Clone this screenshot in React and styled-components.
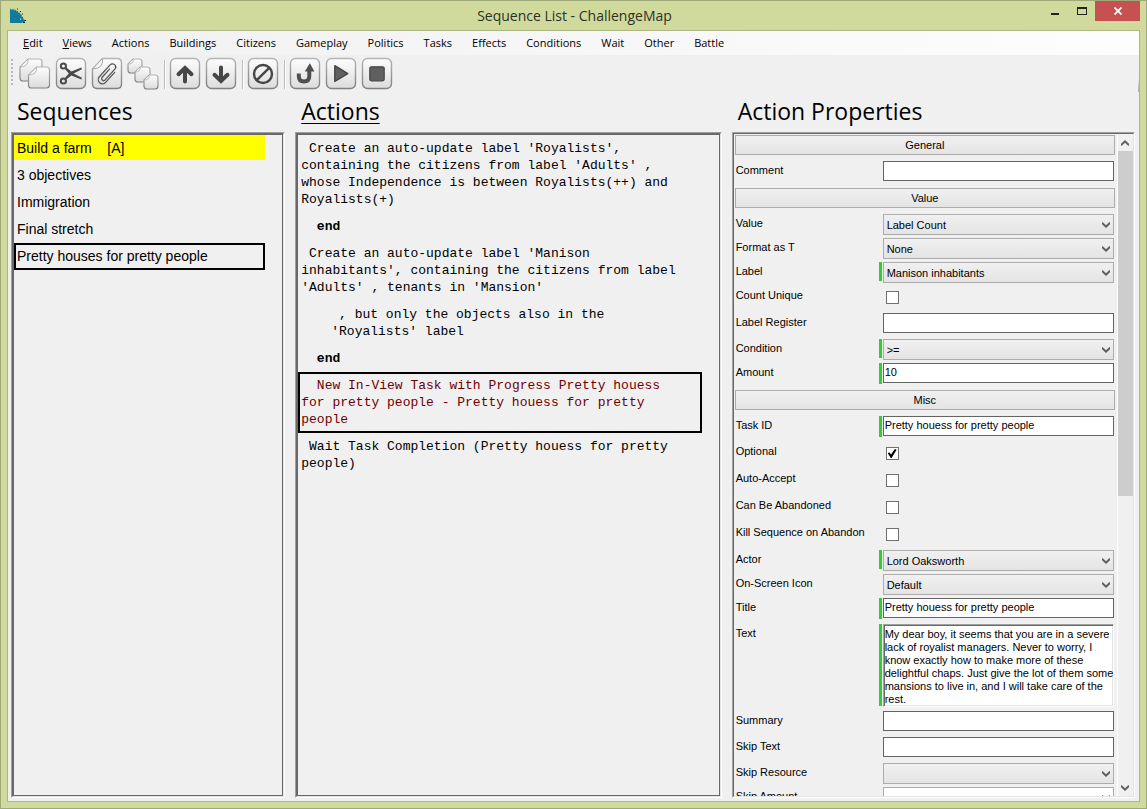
import React from 'react';
import styled, { createGlobalStyle, css } from 'styled-components';

const uiFont = '"Open Sans", "Noto Sans", sans-serif';
const formFont = '"Liberation Sans", Arial, sans-serif';
const codeFont = '"Liberation Mono", "Courier New", monospace';

const GlobalStyle = createGlobalStyle`
    * {
        box-sizing: border-box;
    }
    body {
        margin: 0;
        color: #000;
        background: #d0da9c;
        font-family: ${uiFont};
    }
    button, input, select, textarea {
        margin: 0;
        color: inherit;
        font: inherit;
    }
`;

export const Window = styled.div`
    display: flex;
    flex-direction: column;
    height: 100vh;
    padding: 0 6px 6px;
    border: 1px solid #9fa878;
    background: #d0da9c;
`;

export const TitleBar = styled.header`
    display: grid;
    grid-template-columns: 1fr auto 1fr;
    height: 29px;
    flex: none;
    padding-left: 2px;
`;

export const AppIcon = styled.svg`
    width: 18px;
    height: 18px;
    margin-top: 6px;
`;

export const WindowTitle = styled.h1`
    margin: 0;
    font-size: 14px;
    font-weight: normal;
    line-height: 29px;
    color: #2e3122;
`;

export const WindowButtons = styled.div`
    display: flex;
    justify-content: flex-end;
`;

export const WindowButton = styled.button`
    display: flex;
    align-items: center;
    justify-content: center;
    width: ${({ $close }) => ($close ? 45 : 27)}px;
    height: 20px;
    padding: 0;
    border: 0;
    color: ${({ $close }) => ($close ? '#fff' : '#222')};
    background: ${({ $close }) => ($close ? '#c75050' : 'transparent')};
`;

export const Client = styled.div`
    display: flex;
    flex: 1;
    flex-direction: column;
    min-height: 0;
    border: 1px solid #aeb784;
    background: #f0f0f0;
`;

export const MenuBar = styled.nav`
    display: flex;
    flex: none;
    gap: 20px;
    height: 24px;
    padding: 0 15px;
    background: linear-gradient(90deg, #f0f0f0, #fdfdfd);
`;

export const MenuItem = styled.a`
    font-size: 11px;
    line-height: 24px;
    color: #000;
    text-decoration: none;
    white-space: nowrap;
`;

export const ToolBar = styled.div`
    display: flex;
    flex: none;
    height: 38px;
    padding: 1px 2px 0;
    background: linear-gradient(#f0f0f0 60%, #a8a8a8) right / 1px 36px no-repeat;
`;

export const Grip = styled.div`
    width: 2px;
    height: 27px;
    margin: 3px 4px 0 1px;
    background: repeating-linear-gradient(#b9b9b9 0 2px, transparent 2px 4px);
`;

export const ToolButton = styled.button`
    width: 36px;
    height: 36px;
    padding: 0;
    border: 0;
    background: none;
    svg {
        display: block;
    }
`;

export const Separator = styled.div`
    width: 6px;
    height: 29px;
    margin-top: 4px;
    background: linear-gradient(90deg, #bdbdbd 1px, #fff 1px) 3px 0 / 2px 100% no-repeat;
`;

export const Workspace = styled.main`
    display: grid;
    flex: 1;
    grid-template-columns: 274fr 426fr 403fr;
    gap: 10px;
    min-height: 0;
    padding: 0 4px 3px 3px;
`;

export const Column = styled.section`
    display: flex;
    flex-direction: column;
    min-width: 0;
    min-height: 0;
`;

export const ColumnTitle = styled.h2`
    flex: none;
    margin: 0;
    padding: 0 0 2px 6px;
    font-size: 23px;
    font-weight: normal;
    line-height: 37px;
    text-decoration: ${({ $underlined }) => ($underlined ? 'underline' : 'none')};
    text-decoration-thickness: 1px;
    text-underline-offset: 3px;
`;

export const Sunken = styled.div`
    display: flex;
    flex: 1;
    min-height: 0;
    border: 1px solid;
    border-color: #a0a0a0 #fff #fff #a0a0a0;
`;

export const SunkenInner = styled.div`
    display: flex;
    flex: 1;
    min-width: 0;
    min-height: 0;
    border: 1px solid;
    border-color: #696969 #e3e3e3 #e3e3e3 #696969;
`;

export const List = styled.ul`
    flex: 1;
    min-width: 0;
    margin: 0;
    padding: 0 17px 0 0;
    border: 1px solid #696969;
    overflow: hidden;
    list-style: none;
`;

const selectedBox = css`
    box-shadow: inset 0 0 0 2px #000;
`;

export const SequenceItem = styled.li`
    height: 27px;
    padding-left: 3px;
    border-bottom: ${({ $selected }) => ($selected ? 0 : 2)}px solid transparent;
    background: ${({ $running }) => ($running ? '#ff0' : 'none')} padding-box;
    font-family: ${formFont};
    font-size: 14px;
    line-height: 27px;
    white-space: pre;
    ${({ $selected }) => $selected && selectedBox}
`;

export const ActionItem = styled.li`
    padding: 5px 14px 5px 3px;
    padding-left: ${({ $nested }) => ($nested ? 33 : 3)}px;
    color: ${({ $selected }) => ($selected ? '#700000' : '#000')};
    font-family: ${codeFont};
    font-size: 13px;
    font-weight: ${({ $keyword }) => ($keyword ? 'bold' : 'normal')};
    line-height: 17px;
    white-space: pre-wrap;
    ${({ $selected }) => $selected && selectedBox}
`;

export const Form = styled.form`
    flex: 1;
    min-width: 0;
    padding: 0 2px 0 1px;
    overflow: hidden;
    font-family: ${formFont};
    font-size: 11px;
`;

export const GroupButton = styled.button`
    display: block;
    width: 100%;
    height: 20px;
    margin: 1px 0 6px;
    padding: 0;
    border: 1px solid #acacac;
    background: linear-gradient(#f0f0f0, #e4e4e4);
    line-height: 18px;
`;

const rowHeights = { text: 26, select: 24, number: 24, check: 27, area: 87 };

export const Row = styled.div`
    display: grid;
    grid-template-columns: 142px 3px minmax(0, 1fr);
    column-gap: 1px;
    align-items: start;
    height: ${({ $kind }) => rowHeights[$kind]}px;
    padding: 0 1px;
`;

export const Label = styled.label`
    padding-top: 3px;
    line-height: 13px;
    white-space: nowrap;
`;

export const ChangedBar = styled.span`
    height: ${({ $kind }) => ({ text: 21, area: 82 }[$kind] || 19)}px;
    background: ${({ $changed }) => ($changed ? '#32cd32' : 'none')};
`;

export const TextInput = styled.input`
    width: 100%;
    height: 20px;
    padding: 0 1px 2px;
    border: 1px solid #646464;
    border-radius: 0;
    background: #fff;
    outline: none;
`;

export const TextArea = styled.textarea`
    display: block;
    width: 100%;
    height: 83px;
    padding: 3px 0 0 1px;
    border: 1px solid;
    border-color: #a0a0a0 #fff #fff #a0a0a0;
    box-shadow: inset 1px 1px #696969, inset -1px -1px #e3e3e3;
    line-height: 13px;
    white-space: pre;
    overflow: hidden;
    outline: none;
    resize: none;
`;

export const SelectBox = styled.div`
    display: grid;
    align-items: center;
    > * {
        grid-area: 1 / 1;
    }
    svg {
        justify-self: end;
        margin-right: 4px;
        pointer-events: none;
    }
`;

export const Select = styled.select`
    width: 100%;
    height: 21px;
    padding: 0 20px 0 3px;
    border: 1px solid #acacac;
    border-radius: 0;
    background: ${({ $editable }) => ($editable ? '#fff' : 'linear-gradient(#f0f0f0, #e4e4e4)')};
    appearance: none;
    outline: none;
`;

export const Check = styled.input`
    display: grid;
    place-items: center;
    width: 13px;
    height: 13px;
    margin: 5px 0 0 3px;
    border: 1px solid #707070;
    background: #fff;
    appearance: none;
    &:checked::after {
        content: '';
        width: 9px;
        height: 9px;
        background: #000;
        clip-path: polygon(0 45%, 22% 38%, 38% 62%, 80% 0, 100% 8%, 44% 100%, 34% 100%);
    }
`;

export const ScrollBar = styled.div`
    display: flex;
    flex: none;
    flex-direction: column;
    width: 16px;
    border-left: 1px solid #fff;
    background: #f0f0f0;
`;

export const ScrollButton = styled.button`
    display: flex;
    align-items: center;
    justify-content: center;
    flex: none;
    height: 17px;
    padding: 0;
    border: 0;
    background: none;
    svg {
        transform: ${({ $up }) => ($up ? 'scaleY(-1)' : 'none')};
    }
`;

export const ScrollTrack = styled.div`
    flex: 1;
`;

export const ScrollThumb = styled.div`
    height: 55%;
    background: #cdcdcd;
`;

const Chevron = () => (
    <svg width="8" height="6" viewBox="0 0 8 6" aria-hidden="true">
        <path d="M0 0.3H0.8L4 3.2 7.2 0.3H8V2.2L4 6 0 2.2Z" fill="#606060" />
    </svg>
);

const Tile = () => (
    <rect x="3.5" y="2.5" width="29" height="30" rx="5" fill="url(#tileFill)" stroke="url(#tileEdge)" strokeWidth="1.4" />
);

const Page = ({ x, y, size, fold }) => (
    <g transform={`translate(${x} ${y})`}>
        <path
            d={`M${fold} 0H${size - 3}Q${size} 0 ${size} 3V${size - 3}Q${size} ${size} ${size - 3} ${size}H3Q0 ${size} 0 ${size - 3}V${fold}Z`}
            fill="url(#tileFill)"
            stroke="url(#tileEdge)"
            strokeWidth="1.2"
        />
        <path d={`M${fold} 0Q${fold + 1} ${fold} 0 ${fold}Z`} fill="#f4f4f4" stroke="#aaa" strokeWidth="0.8" />
    </g>
);

const icons = {
    Copy: (
        <>
            <Page x={3} y={3} size={22} fold={8} />
            <Page x={11.5} y={11} size={21} fold={8} />
        </>
    ),
    Cut: (
        <>
            <Tile />
            <g fill="none" stroke="#4a4a4a" strokeWidth="2">
                <ellipse cx="10.4" cy="10" rx="2.6" ry="2.6" />
                <ellipse cx="10.4" cy="25" rx="2.6" ry="2.6" />
            </g>
            <path d="M12.6 11 18.4 15.4 28.4 11.6 28.9 13.2 20.6 17.5 28.9 21.8 28.4 23.4 18.4 19.6 12.6 24 11.5 22.4 15.8 17.5 11.5 12.6Z" fill="#4a4a4a" />
        </>
    ),
    Paste: (
        <>
            <path d="M13.5 2.5H28Q32.5 2.5 32.5 7V28Q32.5 32.5 28 32.5H8Q3.5 32.5 3.5 28V13Z" fill="url(#tileFill)" stroke="url(#tileEdge)" strokeWidth="1.4" />
            <path d="M13.5 2.5Q15 12.5 3.5 13Z" fill="#f6f6f6" stroke="#aaa" />
            <path
                d="M4.2 -6V7.5A4.2 4.2 0 0 1 -4.2 7.5V-8.5A3.2 3.2 0 0 1 2.2 -8.5V6A2 2 0 0 1 -1.8 6V-5"
                transform="translate(18.5 18) rotate(42)"
                fill="none"
                stroke="#585858"
                strokeWidth="1.3"
                strokeLinecap="round"
            />
        </>
    ),
    Duplicate: (
        <>
            <Page x={3} y={3} size={14} fold={5} />
            <Page x={10} y={11} size={15} fold={5} />
            <Page x={19} y={19} size={14} fold={5} />
        </>
    ),
    'Move up': (
        <>
            <Tile />
            <path d="M18 25.5V12.5M11.5 18.2 18 12 24.5 18.2" fill="none" stroke="#464646" strokeWidth="4" strokeLinecap="round" />
        </>
    ),
    'Move down': (
        <>
            <Tile />
            <path d="M18 11.5V24.5M11.5 18.8 18 25 24.5 18.8" fill="none" stroke="#464646" strokeWidth="4" strokeLinecap="round" />
        </>
    ),
    Disable: (
        <>
            <Tile />
            <circle cx="18" cy="18" r="9" fill="none" stroke="#464646" strokeWidth="2.4" />
            <path d="M11.8 24.2 24.2 11.8" stroke="#464646" strokeWidth="2.4" />
        </>
    ),
    Restart: (
        <>
            <Tile />
            <path d="M11.8 17.5V20.2Q11.8 25.4 17 25.4T22.3 20.2V14" fill="none" stroke="#505050" strokeWidth="4" />
            <path d="M22.8 7.3 27.5 15.4H17.8Z" fill="#505050" />
        </>
    ),
    Play: (
        <>
            <Tile />
            <path d="M11.8 9.6 24.8 17.6 11.8 25.4Z" fill="#606060" stroke="#454545" strokeWidth="1.4" strokeLinejoin="round" />
        </>
    ),
    Stop: (
        <>
            <Tile />
            <rect x="10.8" y="10.8" width="14.4" height="14" rx="1.5" fill="#606060" stroke="#454545" strokeWidth="1.2" />
        </>
    ),
};

const toolGroups = [
    ['Copy', 'Cut', 'Paste', 'Duplicate'],
    ['Move up', 'Move down'],
    ['Disable'],
    ['Restart', 'Play', 'Stop'],
];

const menus = ['Actions', 'Buildings', 'Citizens', 'Gameplay', 'Politics', 'Tasks', 'Effects', 'Conditions', 'Wait', 'Other', 'Battle'];

const sequences = [
    { name: 'Build a farm    [A]', running: true },
    { name: '3 objectives' },
    { name: 'Immigration' },
    { name: 'Final stretch' },
    { name: 'Pretty houses for pretty people', selected: true },
];

const actions = [
    { text: " Create an auto-update label 'Royalists', containing the citizens from label 'Adults' , whose Independence is between Royalists(++) and Royalists(+)" },
    { text: '  end', keyword: true },
    { text: " Create an auto-update label 'Manison inhabitants', containing the citizens from label 'Adults' , tenants in 'Mansion'" },
    { text: " , but only the objects also in the 'Royalists' label", nested: true },
    { text: '  end', keyword: true },
    { text: '  New In-View Task with Progress Pretty houess for pretty people - Pretty houess for pretty people', selected: true },
    { text: ' Wait Task Completion (Pretty houess for pretty people)' },
];

const dialogue = [
    'My dear boy, it seems that you are in a severe',
    'lack of royalist managers. Never to worry, I',
    'know exactly how to make more of these',
    'delightful chaps. Just give the lot of them some',
    'mansions to live in, and I will take care of the',
    'rest.',
].join('\n');

const groups = [
    { title: 'General', fields: [{ label: 'Comment', kind: 'text' }] },
    {
        title: 'Value',
        fields: [
            { label: 'Value', kind: 'select', value: 'Label Count' },
            { label: 'Format as T', kind: 'select', value: 'None' },
            { label: 'Label', kind: 'select', value: 'Manison inhabitants', changed: true },
            { label: 'Count Unique', kind: 'check' },
            { label: 'Label Register', kind: 'text' },
            { label: 'Condition', kind: 'select', value: '>=', changed: true },
            { label: 'Amount', kind: 'text', value: '10', changed: true },
        ],
    },
    {
        title: 'Misc',
        fields: [
            { label: 'Task ID', kind: 'text', value: 'Pretty houess for pretty people', changed: true },
            { label: 'Optional', kind: 'check', value: true },
            { label: 'Auto-Accept', kind: 'check' },
            { label: 'Can Be Abandoned', kind: 'check' },
            { label: 'Kill Sequence on Abandon', kind: 'check' },
            { label: 'Actor', kind: 'select', value: 'Lord Oaksworth', changed: true },
            { label: 'On-Screen Icon', kind: 'select', value: 'Default' },
            { label: 'Title', kind: 'text', value: 'Pretty houess for pretty people', changed: true },
            { label: 'Text', kind: 'area', value: dialogue, changed: true },
            { label: 'Summary', kind: 'text' },
            { label: 'Skip Text', kind: 'text' },
            { label: 'Skip Resource', kind: 'select' },
            { label: 'Skip Amount', kind: 'number' },
        ],
    },
];

const Control = ({ id, kind, value }) => {
    if (kind === 'check') {
        return <Check id={id} type="checkbox" defaultChecked={value} />;
    }
    if (kind === 'area') {
        return <TextArea id={id} defaultValue={value} spellCheck={false} />;
    }
    if (kind === 'text') {
        return <TextInput id={id} type="text" defaultValue={value} />;
    }
    return (
        <SelectBox>
            <Select id={id} $editable={kind === 'number'}>
                <option>{value}</option>
            </Select>
            <Chevron />
        </SelectBox>
    );
};

const Field = ({ label, kind, value, changed }) => {
    const id = label.toLowerCase().replace(/\s+/g, '-');
    return (
        <Row $kind={kind}>
            <Label htmlFor={id}>{label}</Label>
            <ChangedBar $kind={kind} $changed={changed} />
            <Control id={id} kind={kind} value={value} />
        </Row>
    );
};

const Panel = ({ title, underlined, children }) => (
    <Column>
        <ColumnTitle $underlined={underlined}>{title}</ColumnTitle>
        <Sunken>
            <SunkenInner>{children}</SunkenInner>
        </Sunken>
    </Column>
);

const Tools = () => (
    <ToolBar role="toolbar">
        <Grip />
        {toolGroups.map((group, i) => (
            <React.Fragment key={group[0]}>
                {i > 0 && <Separator />}
                {group.map((name) => (
                    <ToolButton key={name} type="button" aria-label={name}>
                        <svg width="36" height="36" viewBox="0 0 36 36">
                            <defs>
                                <linearGradient id="tileFill" x1="0" y1="0" x2="0" y2="1">
                                    <stop offset="0" stopColor="#fdfdfd" />
                                    <stop offset="1" stopColor="#dcdcdc" />
                                </linearGradient>
                                <linearGradient id="tileEdge" x1="0" y1="0" x2="0" y2="1">
                                    <stop offset="0" stopColor="#b4b4b4" />
                                    <stop offset="1" stopColor="#808080" />
                                </linearGradient>
                            </defs>
                            {icons[name]}
                        </svg>
                    </ToolButton>
                ))}
            </React.Fragment>
        ))}
    </ToolBar>
);

const App = () => (
    <>
        <GlobalStyle />
        <Window>
            <TitleBar>
                <AppIcon viewBox="0 0 18 18" aria-hidden="true">
                    <path d="M1 1.5 2.5 3 3 1.5 4 3.2 5 1.5 5.8 3.8 7 2.5 7.5 4.5 9 3.8 9.5 6 11 5.5 11.3 7.5 12.8 7.5 12.6 9.5 14 10 14.3 12 16.5 13.2 15.5 15 12 16H1Z" fill="#127a9a" />
                    <path d="M8 1.6h1v1H8zM11 4h1v1h-1zM13 6.6h1v1h-1zM16 13h1v1h-1zM14 15h2v1h-2z" fill="#123" />
                    <path d="M11 11.5h1.2v1.2H11z" fill="#d0da9c" />
                </AppIcon>
                <WindowTitle>Sequence List - ChallengeMap</WindowTitle>
                <WindowButtons>
                    <WindowButton type="button" aria-label="Minimize">
                        <svg width="10" height="10" viewBox="0 0 10 10"><path d="M1 7h8v2H1z" fill="currentColor" /></svg>
                    </WindowButton>
                    <WindowButton type="button" aria-label="Maximize">
                        <svg width="10" height="8" viewBox="0 0 10 8"><path d="M0 0h10v8H0zM1 2v5h8V2z" fill="currentColor" fillRule="evenodd" /></svg>
                    </WindowButton>
                    <WindowButton type="button" aria-label="Close" $close>
                        <svg width="8" height="8" viewBox="0 0 8 8"><path d="M0.5 0.5 7.5 7.5M7.5 0.5 0.5 7.5" stroke="currentColor" strokeWidth="1.8" /></svg>
                    </WindowButton>
                </WindowButtons>
            </TitleBar>
            <Client>
                <MenuBar>
                    <MenuItem href="#edit"><u>E</u>dit</MenuItem>
                    <MenuItem href="#views"><u>V</u>iews</MenuItem>
                    {menus.map((name) => (
                        <MenuItem key={name} href={`#${name.toLowerCase()}`}>{name}</MenuItem>
                    ))}
                </MenuBar>
                <Tools />
                <Workspace>
                    <Panel title="Sequences">
                        <List>
                            {sequences.map(({ name, running, selected }) => (
                                <SequenceItem key={name} $running={running} $selected={selected}>{name}</SequenceItem>
                            ))}
                        </List>
                    </Panel>
                    <Panel title="Actions" underlined>
                        <List>
                            {actions.map(({ text, keyword, nested, selected }, i) => (
                                <ActionItem key={i} $keyword={keyword} $nested={nested} $selected={selected}>{text}</ActionItem>
                            ))}
                        </List>
                    </Panel>
                    <Panel title="Action Properties">
                        <Form>
                            {groups.map(({ title, fields }) => (
                                <React.Fragment key={title}>
                                    <GroupButton type="button">{title}</GroupButton>
                                    {fields.map((field) => <Field key={field.label} {...field} />)}
                                </React.Fragment>
                            ))}
                        </Form>
                        <ScrollBar>
                            <ScrollButton type="button" aria-label="Scroll up" $up><Chevron /></ScrollButton>
                            <ScrollTrack><ScrollThumb /></ScrollTrack>
                            <ScrollButton type="button" aria-label="Scroll down"><Chevron /></ScrollButton>
                        </ScrollBar>
                    </Panel>
                </Workspace>
            </Client>
        </Window>
    </>
);

export default App;
